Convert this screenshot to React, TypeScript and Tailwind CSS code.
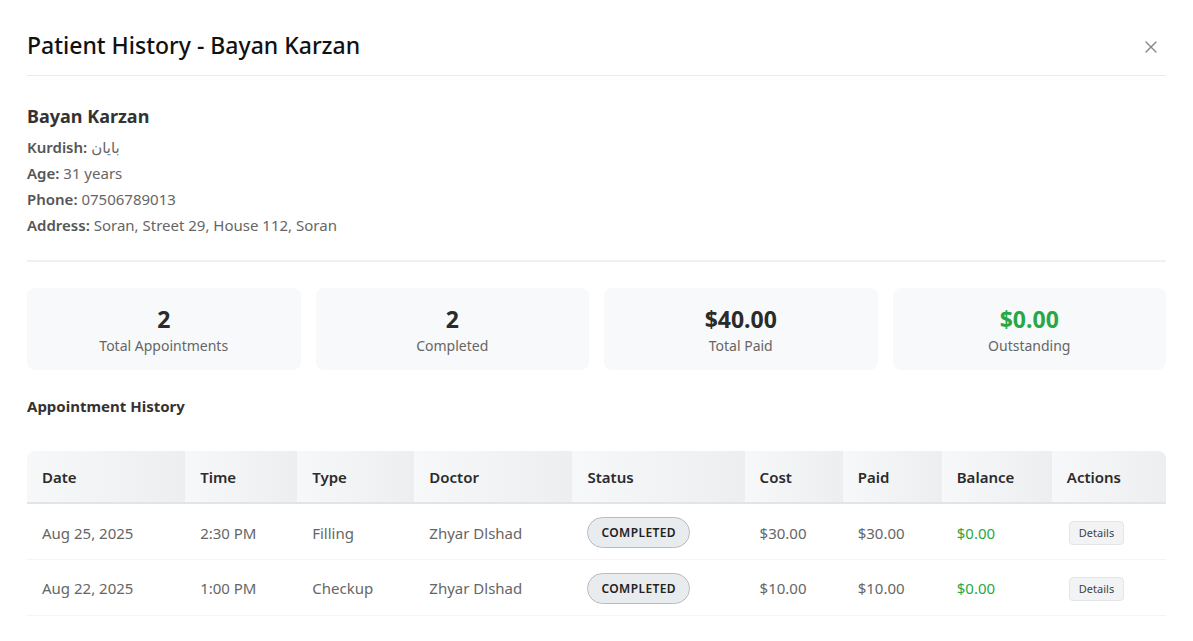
import { X } from 'lucide-react'

type Appointment = {
  date: string
  time: string
  type: string
  doctor: string
  status: string
  cost: string
  paid: string
  balance: string
}

const appointments: Appointment[] = [
  {
    date: 'Aug 25, 2025',
    time: '2:30 PM',
    type: 'Filling',
    doctor: 'Zhyar Dlshad',
    status: 'Completed',
    cost: '$30.00',
    paid: '$30.00',
    balance: '$0.00',
  },
  {
    date: 'Aug 22, 2025',
    time: '1:00 PM',
    type: 'Checkup',
    doctor: 'Zhyar Dlshad',
    status: 'Completed',
    cost: '$10.00',
    paid: '$10.00',
    balance: '$0.00',
  },
]

const columns = [
  { label: 'Date', width: 'w-[158px]' },
  { label: 'Time', width: 'w-[112px]' },
  { label: 'Type', width: 'w-[117px]' },
  { label: 'Doctor', width: 'w-[158px]' },
  { label: 'Status', width: 'w-[172px]' },
  { label: 'Cost', width: 'w-[98px]' },
  { label: 'Paid', width: 'w-[99px]' },
  { label: 'Balance', width: 'w-[110px]' },
  { label: 'Actions', width: 'w-[114px]' },
]

const stats = [
  { value: '2', label: 'Total Appointments', color: 'text-[#2b2b2b]' },
  { value: '2', label: 'Completed', color: 'text-[#2b2b2b]' },
  { value: '$40.00', label: 'Total Paid', color: 'text-[#2b2b2b]' },
  { value: '$0.00', label: 'Outstanding', color: 'text-[#28a745]' },
]

function InfoLine({ label, children }: { label: string; children: React.ReactNode }) {
  return (
    <p className="text-[15px] leading-[26px] text-[#666]">
      <span className="font-semibold text-[#555]">{label}:</span> {children}
    </p>
  )
}

export default function App() {
  return (
    <div
      className="min-h-screen bg-white px-[27px] pt-[28px] text-[#333]"
      style={{ fontFamily: '"Noto Sans", "Open Sans", sans-serif' }}
    >
      <div className="flex items-center justify-between border-b border-[#e9ecef] pb-[13px]">
        <h2 className="text-[23px] leading-[34px] font-medium text-[#111]">
          Patient History - Bayan Karzan
        </h2>
        <button className="mt-[3px] mr-[5px] text-[#888]">
          <X size={20} strokeWidth={1.6} />
        </button>
      </div>

      <div className="border-b-2 border-[#eef0f2] pt-[27px] pb-[22px]">
        <h3 className="mb-[5px] text-[18px] leading-[26px] font-bold text-[#333]">Bayan Karzan</h3>
        <InfoLine label="Kurdish">
          <span style={{ fontFamily: '"Noto Sans", "DejaVu Sans", sans-serif' }}>بایان</span>
        </InfoLine>
        <InfoLine label="Age">31 years</InfoLine>
        <InfoLine label="Phone">07506789013</InfoLine>
        <InfoLine label="Address">Soran, Street 29, House 112, Soran</InfoLine>
      </div>

      <div className="mt-[26px] grid grid-cols-4 gap-[15px]">
        {stats.map((s) => (
          <div
            key={s.label}
            className="flex h-[82px] flex-col items-center justify-center rounded-lg bg-[#f8f9fa] pt-[2px]"
          >
            <div className={`text-[23px] leading-[32px] font-bold ${s.color}`}>{s.value}</div>
            <div className="text-[14px] leading-[22px] text-[#666]">{s.label}</div>
          </div>
        ))}
      </div>

      <h4 className="mt-[25px] text-[15px] leading-[22px] font-bold text-[#333]">
        Appointment History
      </h4>

      <div className="mt-[34px] overflow-hidden rounded-t-lg">
        <table className="w-full table-fixed border-collapse">
          <thead>
            <tr className="border-b-2 border-[#e2e5e8]">
              {columns.map((c) => (
                <th
                  key={c.label}
                  className={`${c.width} h-[52px] bg-linear-to-r from-[#f7f8f9] to-[#eceef0] px-[15px] pt-[2px] text-left text-[15px] font-semibold text-[#2b2b2b]`}
                >
                  {c.label}
                </th>
              ))}
            </tr>
          </thead>
          <tbody>
            {appointments.map((a) => (
              <tr key={a.date} className="h-[56px] border-b border-[#f3f4f5] text-[15px] text-[#666]">
                <td className="px-[15px] pt-[3px]">{a.date}</td>
                <td className="px-[15px] pt-[3px]">{a.time}</td>
                <td className="px-[15px] pt-[3px]">{a.type}</td>
                <td className="px-[15px] pt-[3px]">{a.doctor}</td>
                <td className="px-[15px] pt-[3px]">
                  <span className="inline-flex h-[31px] items-center rounded-full border border-[#b8bcc0] bg-[#e9ecef] px-[13px] text-[12px] font-semibold tracking-[0.4px] text-[#222] uppercase">
                    {a.status}
                  </span>
                </td>
                <td className="px-[15px] pt-[3px]">{a.cost}</td>
                <td className="px-[15px] pt-[3px]">{a.paid}</td>
                <td className="px-[15px] pt-[3px] text-[#28a745]">{a.balance}</td>
                <td className="px-[15px] pt-[3px]">
                  <button className="ml-[2px] h-[24px] rounded border border-[#e3e5e8] bg-[#f1f3f5] px-[9px] text-[11px] text-[#444]">
                    Details
                  </button>
                </td>
              </tr>
            ))}
          </tbody>
        </table>
      </div>
    </div>
  )
}
